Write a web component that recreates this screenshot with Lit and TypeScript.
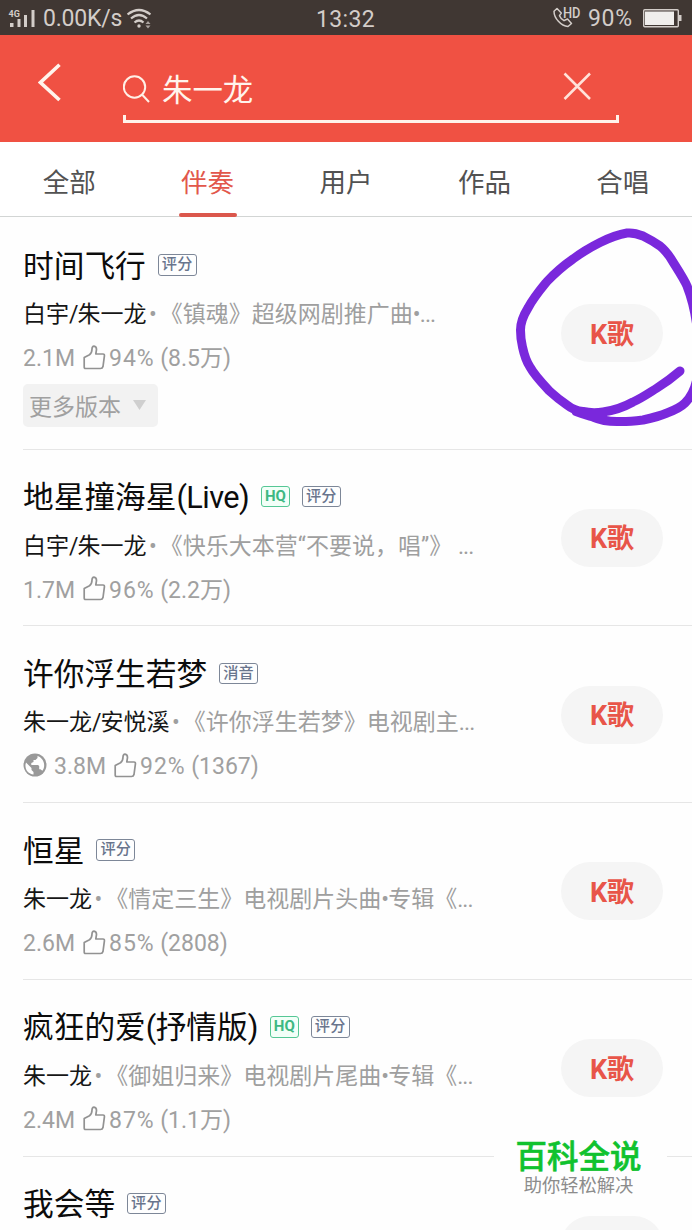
import { LitElement, html, css, svg, nothing } from "lit";
import { customElement, property } from "lit/decorators.js";

interface Song {
  title: string;
  tags: string[];
  singer?: string;
  desc?: string;
  plays?: string;
  rate?: string;
  votes?: string;
  web?: boolean;
  versions?: boolean;
}

const SONGS: Song[] = [
  { title: "时间飞行", tags: ["评分"], singer: "白宇/朱一龙", desc: "《镇魂》超级网剧推广曲•...", plays: "2.1M", rate: "94%", votes: "(8.5万)", versions: true },
  { title: "地星撞海星(Live)", tags: ["HQ", "评分"], singer: "白宇/朱一龙", desc: "《快乐大本营“不要说，唱”》 ...", plays: "1.7M", rate: "96%", votes: "(2.2万)" },
  { title: "许你浮生若梦", tags: ["消音"], singer: "朱一龙/安悦溪", desc: "《许你浮生若梦》电视剧主...", plays: "3.8M", rate: "92%", votes: "(1367)", web: true },
  { title: "恒星", tags: ["评分"], singer: "朱一龙", desc: "《情定三生》电视剧片头曲•专辑《...", plays: "2.6M", rate: "85%", votes: "(2808)" },
  { title: "疯狂的爱(抒情版)", tags: ["HQ", "评分"], singer: "朱一龙", desc: "《御姐归来》电视剧片尾曲•专辑《...", plays: "2.4M", rate: "87%", votes: "(1.1万)" },
  { title: "我会等", tags: ["评分"] },
];

/** Sets the Latin and punctuation runs of a mixed string a little tighter. */
const mixed = (text: string) =>
  text.split(/([()\w/•.]+)/).map((part, i) => (i % 2 ? html`<span class="tight">${part}</span>` : part));

@customElement("status-bar")
class StatusBar extends LitElement {
  static styles = css`
    :host { display: grid; grid-template-columns: 1fr auto 1fr; align-items: center; height: 35px; padding: 0 9px 0 8px; box-sizing: border-box; background: #403733; color: #d3cdc9; font-size: 23px; line-height: 35px; }
    .side { display: flex; align-items: center; height: 35px; }
    .right { justify-content: flex-end; }
    .speed { margin-left: 7px; letter-spacing: -0.2px; }
    .wifi { margin-left: 5px; }
    .clock { padding-top: 2px; letter-spacing: 0.3px; }
    .pct { margin: 0 10px 0 6px; letter-spacing: 0.8px; }
    .small { font: 700 9px Roboto, sans-serif; }
    .hd { font: 500 14px Roboto, sans-serif; }
    svg { display: block; flex: none; }
  `;
  render() {
    return html`
      <div class="side">
        <svg width="28" height="35" viewBox="8 0 28 35" fill="#d3cdc9">
          <text class="small" x="8.500" y="15.500">4G</text>
          <rect x="10" y="22" width="3.500" height="4" /><rect x="17.500" y="18" width="3" height="8" />
          <rect x="24" y="14" width="3" height="12" /><rect x="31.500" y="9" width="3" height="17" />
        </svg>
        <span class="speed">0.00K/s</span>
        <svg class="wifi" width="24" height="35" viewBox="127 0 24 35" fill="none" stroke="#d3cdc9" stroke-width="2.200">
          <path d="M127.500 13.500Q139 4.500 150.500 13.500M131 17.500Q139 10.500 147 17.500M134.500 21.500Q139 17.500 143.500 21.500" />
          <circle cx="139" cy="25" r="1.700" fill="#d3cdc9" stroke="none" />
          <path d="M145.500 23l2.500-3 2.500 3zM145.500 24.500l2.500 3 2.500-3z" fill="#a9a29e" stroke="none" />
        </svg>
      </div>
      <span class="clock">13:32</span>
      <div class="side right">
        <svg width="30" height="35" viewBox="548 0 30 35" fill="none" stroke="#d3cdc9" stroke-width="1.500">
          <path d="M553 7.500l-3 2.700c0 7 7 14.800 14 15.300l3.500-3-4-4.500-3.500 1.700c-2.200-1.200-3.700-3-4.500-5l1.800-2.700z" stroke-linejoin="round" />
          <text class="hd" x="559" y="17" textLength="17.500" lengthAdjust="spacingAndGlyphs" fill="#d3cdc9" stroke="none">HD</text>
        </svg>
        <span class="pct">90%</span>
        <svg width="40" height="35" viewBox="643 0 40 35">
          <rect x="643.700" y="8.700" width="34.600" height="17" rx="1" fill="none" stroke="#d3cdc9" stroke-width="1.400" />
          <rect x="645" y="10.500" width="29" height="13.500" fill="#f0eeec" /><rect x="679" y="14" width="2.500" height="6" fill="#d3cdc9" />
        </svg>
      </div>`;
  }
}

@customElement("search-header")
class SearchHeader extends LitElement {
  static styles = css`
    :host { display: flex; height: 107px; padding: 0 73px 0 38px; box-sizing: border-box; background: #f05143; color: #fff4ec; }
    .back { margin: 28px 61px 0 0; flex: none; }
    .field { flex: 1; display: flex; flex-direction: column; padding-top: 31px; }
    .line { display: flex; align-items: center; height: 46px; }
    .query { flex: 1; margin-left: 12px; padding-top: 3px; font-size: 30.400px; line-height: 46px; }
    .clear { margin: -6px 28px 0 0; }
    .under { height: 8px; margin-top: 3px; box-sizing: border-box; border: solid #fff2ea; border-width: 0 3px 3px; }
  `;
  render() {
    return html`
      <svg class="back" width="24" height="40" viewBox="38 63 24 40"><path d="M59.500 64.800L40.500 82.500 59.500 100" fill="none" stroke="#fff4ec" stroke-width="3.600" /></svg>
      <div class="field">
        <div class="line">
          <svg width="27" height="30" viewBox="122.500 73 27 30" fill="none" stroke="#fff0e6" stroke-width="2"><circle cx="134" cy="86" r="10.700" /><path d="M141.500 93.500l7 7.500" /></svg>
          <span class="query">朱一龙</span>
          <svg class="clear" width="28" height="28" viewBox="563.500 71.500 28 28"><path d="M565 73L590.500 98.500M590.500 73L565 98.500" stroke="#ffe3da" stroke-width="2.500" /></svg>
        </div>
        <div class="under"></div>
      </div>`;
  }
}

@customElement("result-tabs")
class ResultTabs extends LitElement {
  static styles = css`
    :host { display: grid; grid-template-columns: repeat(5, 1fr); height: 75px; box-sizing: border-box; border-bottom: 1.500px solid #d2d5d4; background: #fff; color: #525252; }
    .tab { display: flex; flex-direction: column; align-items: center; justify-content: space-between; font-size: 26.500px; line-height: 74px; height: 75px; padding-top: 4px; box-sizing: border-box; }
    .tab span { height: 66px; }
    .on { color: #e2574b; }
    .bar { width: 58px; height: 4.500px; border-radius: 2px; background: #db574c; }
  `;
  render() {
    return ["全部", "伴奏", "用户", "作品", "合唱"].map(
      (t, i) => html`<div class="tab ${i === 1 ? "on" : ""}"><span>${t}</span>${i === 1 ? html`<i class="bar"></i>` : nothing}</div>`
    );
  }
}

@customElement("song-row")
class SongRow extends LitElement {
  @property({ attribute: false }) song!: Song;
  static styles = css`
    :host { display: flex; align-items: center; height: 176.750px; margin-left: 23px; padding: 1px 29px 0 0; box-sizing: border-box; border-bottom: 1px solid #e6e6e6; }
    :host([tall]) { height: 232.600px; }
    .info { flex: 1; min-width: 0; align-self: flex-start; padding-top: 22px; white-space: nowrap; }
    :host([tall]) .info { padding-top: 23px; }
    .head { display: flex; align-items: center; height: 48px; font-size: 30.700px; line-height: 48px; color: #0c0c0c; }
    .name { padding-top: 3px; }
    .head .tight { letter-spacing: -0.600px; }
    .tag { height: 21.500px; margin-left: 12px; padding: 0 3px; box-sizing: border-box; border: 1.400px solid #7d8798; border-radius: 3px; font-size: 15.200px; line-height: 19.500px; font-weight: 500; color: #69758d; letter-spacing: 0.2px; }
    .hq { border-color: #55c795; color: #3db883; background: #f2fff8; font-size: 15px; font-weight: 700; letter-spacing: 0; }
    .sub { height: 48px; font-size: 23px; line-height: 51px; color: #9f9f9f; }
    .sub .tight { letter-spacing: -0.900px; }
    .singer { color: #161616; }
    .dot { margin: 0 3px 0 2.500px; }
    .stats { display: flex; align-items: center; height: 40px; padding-top: 2px; font-size: 23px; line-height: 40px; color: #a0a0a0; }
    .globe { margin: -4px 7px 0 0; }
    .thumb { margin: -4px 3.500px 0 7.500px; }
    .rate { letter-spacing: 1px; }
    .votes { margin-left: 5.500px; }
    .versions { display: inline-flex; align-items: center; width: 135px; height: 43px; margin-top: 5px; padding: 0 12px 0 6px; box-sizing: border-box; border-radius: 5px; background: #f2f2f2; color: #a0a0a0; font-size: 23px; line-height: 43px; justify-content: space-between; }
    .versions span { padding-top: 3px; }
    .sing { display: flex; align-items: center; justify-content: center; width: 102px; height: 58px; padding-bottom: 2px; box-sizing: border-box; border-radius: 29px; background: #f5f5f5; color: #e85549; font-size: 27px; font-weight: 700; flex: none; }
    svg { flex: none; display: block; }
  `;
  render() {
    const s = this.song;
    return html`
      <div class="info">
        <div class="head"><span class="name">${mixed(s.title)}</span>${s.tags.map((t) => html`<span class="tag ${t === "HQ" ? "hq" : ""}">${t}</span>`)}</div>
        ${s.singer
          ? html`<div class="sub"><span class="singer">${mixed(s.singer)}</span><span class="dot">•</span><span class="desc">${mixed(s.desc ?? "")}</span></div>
        <div class="stats">
          ${s.web
            ? html`<svg class="globe" width="24" height="24" viewBox="0 0 24 24"><circle cx="12" cy="12" r="11.500" fill="#999" /><path d="M3 9.500l5.500 5.500v2l2 2v2.500C5.500 21 2 17 2.500 11.500zM14.500 3v2l-2 2h-2v2l-2.200 1v2h6.700l1.200 1v3.200h1.200l2 1.600C23 13 21 5 14.500 3z" fill="#fff" /></svg>`
            : nothing}
          <span>${s.plays}</span>
          <svg class="thumb" width="23" height="25" viewBox="0 0 23 25" fill="none" stroke="#929292" stroke-width="1.700" stroke-linejoin="round"><path d="M1.200 12.500L6.500 9.800Q9 8 9 4 9 1.200 11 1.200 13.500 1.500 13.500 4.500L12.800 9H20Q21.700 9 21.400 11L20 21.500Q19.500 23.500 17.500 23.500H2.500Q1.200 23.500 1.200 22Z" /></svg>
          <span class="rate">${s.rate}</span><span class="votes">${s.votes}</span>
        </div>`
          : nothing}
        ${s.versions ? html`<div class="versions"><span>更多版本</span><svg width="13" height="11" viewBox="0 0 13 11"><path d="M0 0h13L6.500 10z" fill="#cfcfcf" /></svg></div>` : nothing}
      </div>
      <div class="sing">${s.singer ? "K歌" : nothing}</div>`;
  }
}

@customElement("app-root")
class AppRoot extends LitElement {
  static styles = css`
    :host { display: block; position: relative; width: 692px; height: 1230px; overflow: hidden; background: #fefefe; font-family: Roboto, "Noto Sans CJK SC", sans-serif; }
    .mark { position: absolute; left: 494px; top: 1126px; width: 173px; height: 86px; padding-right: 4px; box-sizing: border-box; background: #fefefe; display: flex; flex-direction: column; align-items: center; white-space: nowrap; }
    .name { font-size: 31.500px; line-height: 40px; font-weight: 500; color: #10c22e; margin-top: 12px; -webkit-text-stroke: 0.6px #10c22e; }
    .slogan { font-size: 18.300px; line-height: 20px; margin-top: -2px; color: #8c8c8c; }
    .ink { position: absolute; left: 0; top: 0; }
  `;
  render() {
    return html`
      <status-bar></status-bar>
      <search-header></search-header>
      <result-tabs></result-tabs>
      ${SONGS.map((s) => html`<song-row .song=${s} ?tall=${!!s.versions}></song-row>`)}
      <div class="mark"><span class="name">百科全说</span><span class="slogan">助你轻松解决</span></div>
      <svg class="ink" width="692" height="440" fill="none" stroke="#7a28dc" stroke-width="9" stroke-linecap="round" stroke-linejoin="round">
        ${svg`<path d="M576 411.500C583 414 589 416 593 417C600 420 608 421.500 617 421.500C627 422 635 421 643 420C652 418 660 416 667 413C675 410 681 407 685 403C692 396 697 385 698 370C700 335 696 309 687 286C684 279 678 270 673 262C669 255 665 250 660 246C653 241 649 239 643 236C637 233.500 632 232.500 627 233C618 234.500 609 238 600 242.500C590 247.500 581 253 573 259C563 266 555 273 547 281.500C540 290 534 297 528 308C523 316 520.500 322 520.500 330C520.500 336 521 341 522.500 347C524 354 526 361 530 367C535 376 542 383 550 391.500C556 397 561 401 567 405C572 409 577 411 583 411.500C590 413 596 413 603 412C614 410.500 624 407 633 402C642 398 649 393 657 388C665 383 673 377 680 371" />`}
      </svg>`;
  }
}
